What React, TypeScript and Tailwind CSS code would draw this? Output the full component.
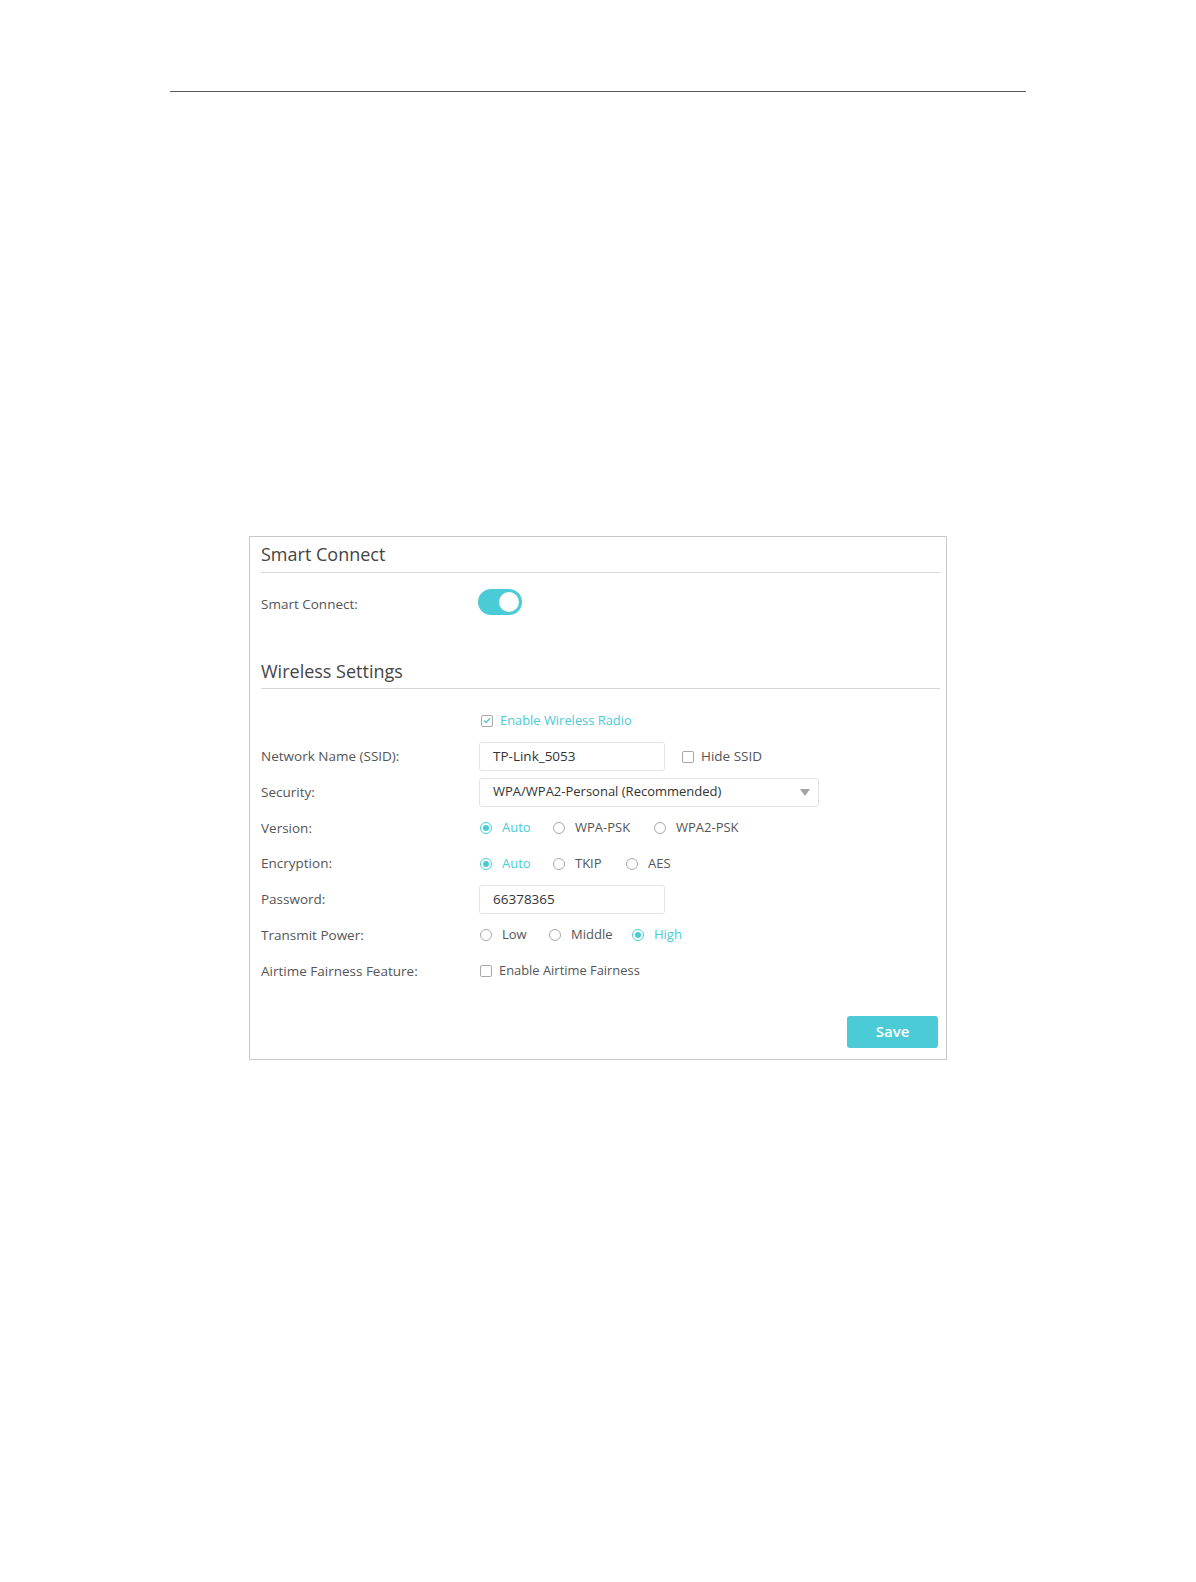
import React from "react";

const TEAL = "text-[#4acbd6]";

function Radio({ checked, label, width }: { checked?: boolean; label: string; width: string }) {
  return (
    <div className={`flex items-center ${width}`}>
      <span
        className={`flex h-[12px] w-[12px] items-center justify-center rounded-full border ${
          checked ? "border-[#4acbd6]" : "border-[#a8a8a8]"
        } bg-white`}
      >
        {checked && <span className="h-[6px] w-[6px] rounded-full bg-[#4acbd6]" />}
      </span>
      <span className={`ml-[10px] text-[13px] ${checked ? TEAL : "text-[#555555]"}`}>{label}</span>
    </div>
  );
}

function Checkbox({
  checked,
  label,
  teal,
  small,
}: {
  checked?: boolean;
  label: string;
  teal?: boolean;
  small?: boolean;
}) {
  return (
    <div className="flex items-center">
      <span className="flex h-[12px] w-[12px] items-center justify-center rounded-[2px] border border-[#a8a8a8] bg-white">
        {checked && (
          <svg width="8" height="7" viewBox="0 0 8 7">
            <path d="M1 3.6 L3.1 5.6 L7 1.2" fill="none" stroke="#4acbd6" strokeWidth="1.4" />
          </svg>
        )}
      </span>
      <span className={`ml-[7px] ${small ? "text-[12.9px]" : ""} ${teal ? TEAL : "text-[#555555]"}`}>
        {label}
      </span>
    </div>
  );
}

function Row({ label, children }: { label?: string; children: React.ReactNode }) {
  return (
    <div className="flex h-[35.7px] items-center">
      <div className="w-[218px] shrink-0 text-[#555555]">{label}</div>
      <div className="flex items-center">{children}</div>
    </div>
  );
}

export default function App() {
  return (
    <div
      className="h-[1582px] w-[1196px] bg-white pt-[91px]"
      style={{ fontFamily: '"Open Sans", "Liberation Sans", sans-serif' }}
    >
      <div className="ml-[170px] h-px w-[856px] bg-[#5a5a5a]" />

      <div className="ml-[249px] mt-[444px] h-[524px] w-[698px] border border-[#c9c9c9] pl-[11px] pr-[6px] text-[13.5px]">
        {/* Smart Connect heading */}
        <div className="flex h-[35px] items-center text-[18px] text-[#444444]">Smart Connect</div>
        <div className="h-px bg-[#d6d6d6]" />

        <div className="flex h-[58px] items-center">
          <div className="w-[217px] shrink-0 pt-[5px] text-[#555555]">Smart Connect:</div>
          <div className="flex h-[26px] w-[44px] items-center justify-end rounded-full bg-[#4acbd6] pr-[3px]">
            <span className="h-[20px] w-[20px] rounded-full bg-white" />
          </div>
        </div>

        {/* Wireless Settings heading */}
        <div className="flex h-[57px] items-end">
          <div className="flex h-[34px] items-center text-[18px] text-[#444444]">Wireless Settings</div>
        </div>
        <div className="h-px bg-[#d6d6d6]" />

        <div className="h-[14px]" />

        <Row>
          <div className="ml-[2px]">
            <Checkbox checked label="Enable Wireless Radio" teal small />
          </div>
        </Row>

        <Row label="Network Name (SSID):">
          <div className="flex h-[29px] w-[186px] items-center rounded-[3px] border border-[#e3e3e3] pl-[13px] text-[#333333]">
            TP-Link_5053
          </div>
          <div className="ml-[17px]">
            <Checkbox label="Hide SSID" />
          </div>
        </Row>

        <Row label="Security:">
          <div className="flex h-[29px] w-[340px] items-center justify-between rounded-[3px] border border-[#e3e3e3] pl-[13px] pr-[8px] text-[13px] text-[#333333]">
            <span>WPA/WPA2-Personal (Recommended)</span>
            <svg width="10" height="7" viewBox="0 0 10 7">
              <path d="M0 0 L10 0 L5 7 Z" fill="#a3a3a3" />
            </svg>
          </div>
        </Row>

        <Row label="Version:">
          <div className="ml-[1px] flex items-center">
            <Radio checked label="Auto" width="w-[73px]" />
            <Radio label="WPA-PSK" width="w-[101px]" />
            <Radio label="WPA2-PSK" width="w-[100px]" />
          </div>
        </Row>

        <Row label="Encryption:">
          <div className="ml-[1px] flex items-center">
            <Radio checked label="Auto" width="w-[73px]" />
            <Radio label="TKIP" width="w-[73px]" />
            <Radio label="AES" width="w-[60px]" />
          </div>
        </Row>

        <Row label="Password:">
          <div className="flex h-[29px] w-[186px] items-center rounded-[3px] border border-[#e3e3e3] pl-[13px] text-[#333333]">
            66378365
          </div>
        </Row>

        <Row label="Transmit Power:">
          <div className="ml-[1px] flex items-center">
            <Radio label="Low" width="w-[69px]" />
            <Radio label="Middle" width="w-[83px]" />
            <Radio checked label="High" width="w-[60px]" />
          </div>
        </Row>

        <Row label="Airtime Fairness Feature:">
          <div className="ml-[1px]">
            <Checkbox label="Enable Airtime Fairness" small />
          </div>
        </Row>

        <div className="mt-[27px] flex justify-end pr-[2px]">
          <button className="h-[32px] w-[91px] rounded-[3px] bg-[#4acbd6] text-[15px] font-semibold text-white">
            Save
          </button>
        </div>
      </div>
    </div>
  );
}
